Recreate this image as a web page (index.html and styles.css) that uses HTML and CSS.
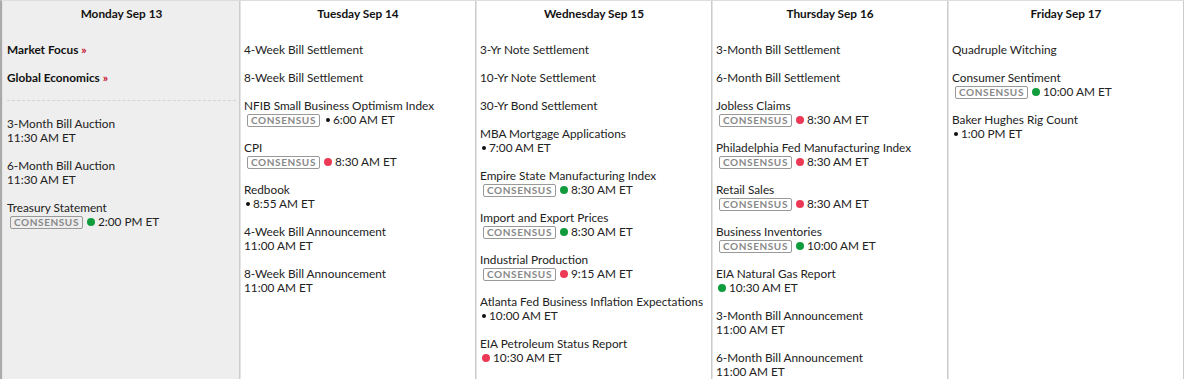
FILE: index.html
```html
<!DOCTYPE html>
<html>
<head>
<meta charset="utf-8">
<link rel="stylesheet" href="styles.css">
</head>
<body>
<div class="cal">
  <div class="col today">
    <div class="head">Monday Sep 13</div>
    <div class="links">
      <div class="ev bold">Market Focus <span class="raquo">»</span></div>
      <div class="ev bold">Global Economics <span class="raquo">»</span></div>
    </div>
    <div class="ev"><div>3-Month Bill Auction</div><div>11:30 AM ET</div></div>
    <div class="ev"><div>6-Month Bill Auction</div><div>11:30 AM ET</div></div>
    <div class="ev"><div>Treasury Statement</div><div class="meta"><span class="badge">CONSENSUS</span><span class="dot green"></span>2:00 PM ET</div></div>
  </div>
  <div class="col">
    <div class="head">Tuesday Sep 14</div>
    <div class="ev">4-Week Bill Settlement</div>
    <div class="ev">8-Week Bill Settlement</div>
    <div class="ev"><div>NFIB Small Business Optimism Index</div><div class="meta"><span class="badge">CONSENSUS</span><span class="dot black"></span>6:00 AM ET</div></div>
    <div class="ev"><div>CPI</div><div class="meta"><span class="badge">CONSENSUS</span><span class="dot red"></span>8:30 AM ET</div></div>
    <div class="ev"><div>Redbook</div><div class="meta"><span class="dot black first"></span>8:55 AM ET</div></div>
    <div class="ev"><div>4-Week Bill Announcement</div><div>11:00 AM ET</div></div>
    <div class="ev"><div>8-Week Bill Announcement</div><div>11:00 AM ET</div></div>
  </div>
  <div class="col">
    <div class="head">Wednesday Sep 15</div>
    <div class="ev">3-Yr Note Settlement</div>
    <div class="ev">10-Yr Note Settlement</div>
    <div class="ev">30-Yr Bond Settlement</div>
    <div class="ev"><div>MBA Mortgage Applications</div><div class="meta"><span class="dot black first"></span>7:00 AM ET</div></div>
    <div class="ev"><div>Empire State Manufacturing Index</div><div class="meta"><span class="badge">CONSENSUS</span><span class="dot green"></span>8:30 AM ET</div></div>
    <div class="ev"><div>Import and Export Prices</div><div class="meta"><span class="badge">CONSENSUS</span><span class="dot green"></span>8:30 AM ET</div></div>
    <div class="ev"><div>Industrial Production</div><div class="meta"><span class="badge">CONSENSUS</span><span class="dot red"></span>9:15 AM ET</div></div>
    <div class="ev"><div>Atlanta Fed Business Inflation Expectations</div><div class="meta"><span class="dot black first"></span>10:00 AM ET</div></div>
    <div class="ev"><div>EIA Petroleum Status Report</div><div class="meta"><span class="dot red first"></span>10:30 AM ET</div></div>
  </div>
  <div class="col">
    <div class="head">Thursday Sep 16</div>
    <div class="ev">3-Month Bill Settlement</div>
    <div class="ev">6-Month Bill Settlement</div>
    <div class="ev"><div>Jobless Claims</div><div class="meta"><span class="badge">CONSENSUS</span><span class="dot red"></span>8:30 AM ET</div></div>
    <div class="ev"><div>Philadelphia Fed Manufacturing Index</div><div class="meta"><span class="badge">CONSENSUS</span><span class="dot red"></span>8:30 AM ET</div></div>
    <div class="ev"><div>Retail Sales</div><div class="meta"><span class="badge">CONSENSUS</span><span class="dot red"></span>8:30 AM ET</div></div>
    <div class="ev"><div>Business Inventories</div><div class="meta"><span class="badge">CONSENSUS</span><span class="dot green"></span>10:00 AM ET</div></div>
    <div class="ev"><div>EIA Natural Gas Report</div><div class="meta"><span class="dot green first"></span>10:30 AM ET</div></div>
    <div class="ev"><div>3-Month Bill Announcement</div><div>11:00 AM ET</div></div>
    <div class="ev"><div>6-Month Bill Announcement</div><div>11:00 AM ET</div></div>
  </div>
  <div class="col">
    <div class="head">Friday Sep 17</div>
    <div class="ev">Quadruple Witching</div>
    <div class="ev"><div>Consumer Sentiment</div><div class="meta"><span class="badge">CONSENSUS</span><span class="dot green"></span>10:00 AM ET</div></div>
    <div class="ev"><div>Baker Hughes Rig Count</div><div class="meta"><span class="dot black first"></span>1:00 PM ET</div></div>
  </div>
</div>
</body>
</html>
```

FILE: styles.css
```css
html, body {
  margin: 0;
  padding: 0;
  background: #fff;
}
body {
  font-family: Lato, "Liberation Sans", sans-serif;
  font-size: 11.8px;
  line-height: 14px;
  color: #222;
}
.cal {
  display: grid;
  grid-template-columns: 238px 236px 236px 236px 236px;
  border-top: 1px solid #ddd;
  border-left: 2px solid #aaa;
  min-height: 420px;
}
.col {
  padding: 0 3px 0 4px;
  border-right: 1px solid #ccc;
  box-shadow: inset 1px 0 0 #e4e4e4;
  white-space: nowrap;
}
.col.today {
  background: #eee;
  padding-left: 5px;
}
.head {
  text-align: center;
  font-weight: 700;
  color: #111;
  padding-top: 6px;
  margin-bottom: 22px;
}
.ev {
  margin-bottom: 14px;
}
.links {
  border-bottom: 1px dashed #d4d4d4;
  margin-bottom: 16px;
  padding-bottom: 1px;
}
.bold {
  font-weight: 700;
  color: #111;
}
.raquo {
  color: #c8102e;
}
.meta {
  display: flex;
  align-items: center;
}
.badge {
  display: inline-block;
  border: 1px solid #999;
  border-radius: 2px;
  color: #888;
  font-size: 10px;
  font-weight: 700;
  letter-spacing: 0.6px;
  line-height: 11px;
  padding: 0 3px;
  margin-left: 3px;
  margin-right: 4px;
}
.dot {
  display: inline-block;
  border-radius: 50%;
  margin-right: 3px;
}
.dot.red, .dot.green {
  width: 8px;
  height: 8px;
}
.dot.red { background: #ec3a56; }
.dot.green { background: #109c3c; }
.dot.black {
  width: 4px;
  height: 4px;
  background: #111;
  margin-right: 3px;
  margin-left: 2px;
}
.dot.first {
  margin-left: 2px;
}
```
